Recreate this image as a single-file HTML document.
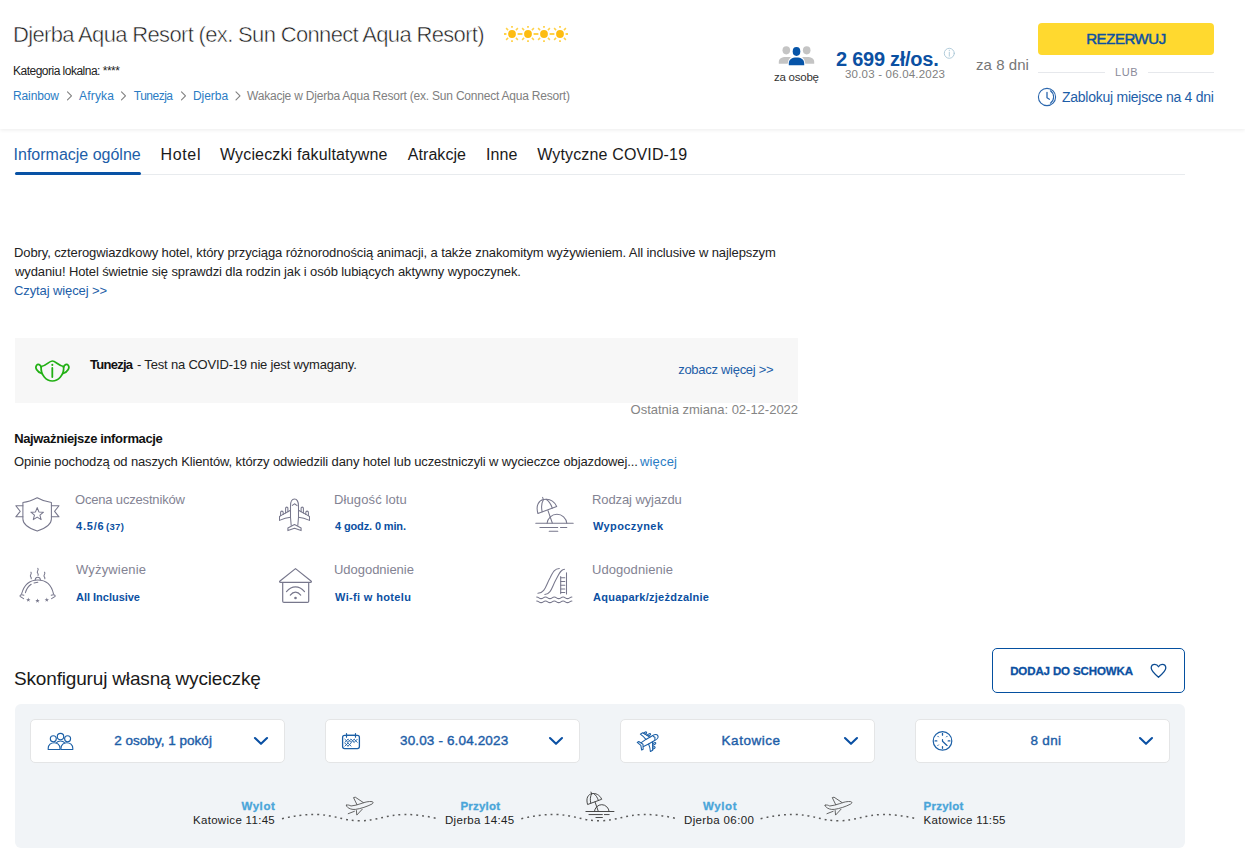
<!DOCTYPE html>
<html lang="pl"><head><meta charset="utf-8"><title>Djerba Aqua Resort</title>
<style>
html,body{margin:0;padding:0;background:#fff;}
body{width:1245px;height:863px;position:relative;overflow:hidden;font-family:"Liberation Sans", sans-serif;}
.t{position:absolute;white-space:pre;line-height:1;display:block;}
.a{position:absolute;}
svg{position:absolute;overflow:visible;}
.dd{top:719px;width:255px;height:44px;box-sizing:border-box;background:#fff;border:1px solid #e4e5e6;border-radius:5px;}
</style></head><body>
<div class="a" style="left:0;top:0;width:1245px;height:129px;background:#fff;box-shadow:0 1px 4px rgba(0,0,0,.08);"></div>
<div class="a" style="left:15px;top:174px;width:1170px;height:1px;background:#e8ebee;"></div>
<div class="a" style="left:15px;top:172px;width:126px;height:3px;background:#0852a5;border-radius:2px;"></div>
<div class="a" style="left:1038px;top:23px;width:176px;height:32px;background:#ffd92f;border-radius:4px;"></div>
<div class="a" style="left:1038px;top:72px;width:67px;height:1px;background:#e6e8ec;"></div>
<div class="a" style="left:1148px;top:72px;width:66px;height:1px;background:#e6e8ec;"></div>
<div class="a" style="left:15px;top:338px;width:783px;height:65px;background:#f7f7f7;"></div>
<div class="a" style="left:992px;top:648px;width:193px;height:45px;box-sizing:border-box;border:1px solid #0550a0;border-radius:5px;"></div>
<div class="a" style="left:15px;top:704px;width:1170px;height:144px;background:#f1f4f7;border-radius:6px;"></div>
<div class="a dd" style="left:30px;"></div>
<div class="a dd" style="left:325px;"></div>
<div class="a dd" style="left:620px;"></div>
<div class="a dd" style="left:915px;"></div>
<svg width="1245" height="863" viewBox="0 0 1245 863" style="left:0;top:0" fill="none" stroke-linecap="round" stroke-linejoin="round">
<defs>
<g id="sun">
<circle r="3.9" fill="#fdbc11" stroke="none"/>
<g stroke="#ffd24a" stroke-width="1.8" stroke-linecap="butt"><path d="M0,-6.2V-8M0,6.2V8M-5.6,0H-8M5.6,0H8"/><path stroke-width="1.5" d="M-3.9,-3.9L-5.9,-5.9M3.9,-3.9L5.9,-5.9M-3.9,3.9L-5.9,5.9M3.9,3.9L5.9,5.9"/></g>
</g>
<g id="plane">
<path d="M-4,-9C-4,-14 -2,-16 0,-16C2,-16 4,-14 4,-9L4,2.2L3.3,10.5M-4,-9L-4,2.2L-3.3,10.5"/>
<path d="M-4,-4.7L-15,1.4L-15,5.4C-11,3.5 -8,2.5 -4,2.2M4,-4.7L15,1.4L15,5.4C11,3.5 8,2.5 4,2.2"/>
<path d="M-8.9,-2V-6.6C-8.9,-8.3 -6.6,-8.3 -6.6,-6.6V-3.3M-13.9,0.8V-2.6C-13.9,-4.3 -11.3,-4.3 -11.3,-2.6V-0.6M8.9,-2V-6.6C8.9,-8.3 6.6,-8.3 6.6,-6.6V-3.3M13.9,0.8V-2.6C13.9,-4.3 11.3,-4.3 11.3,-2.6V-0.6"/>
<path d="M0,9.5L-6.6,13L-6.6,15.6L0,13.2L6.6,15.6L6.6,13Z"/>
<path d="M-2.2,-9.6L0,-11.2L2.6,-9.4"/>
</g>
<g id="beach">
<path d="M535.8,523.3H573.2M539.9,527.4H557.7M560.5,527.4H566.8M549.2,531.3H557.8"/>
<path d="M547.1,523.3A9.9,10.1 0 0 1 566.8,523.3"/>
<path d="M537.9,513.5C535.5,505 539,500.5 543.6,499.6C549,498.5 554,501 556.7,506.5Z"/>
<path d="M543.4,499.6L542.6,497.4M543.4,499.8C541.5,503 541.3,508 542.2,511.8M546,499.3C549,501 551,504.5 552.3,508.1"/>
<path d="M548,510.6L552.3,523"/>
</g>
<g id="sideplane">
<path d="M346.4,805.2C348,804.6 349.5,805.2 351,806C354,805.6 358,804.8 361,803.6C365,802 369,801.2 372,801.6C373.6,802 373.3,803.2 372,804C367,806.6 361,808.6 355.5,809.4C352,809.8 349,808.6 347.5,807.2C346.6,806.4 346.1,805.6 346.4,805.2Z"/>
<path d="M357,804.7L353.5,797.6L355.3,797.2L363.4,802.6"/>
<path d="M356.4,810.5L356.8,815.1L362.2,809.3"/>
<path d="M354.4,811.3L348.2,813.7"/>
</g>
</defs>
<use href="#sun" x="512" y="34"/><use href="#sun" x="528" y="34"/><use href="#sun" x="544" y="34"/><use href="#sun" x="560" y="34"/>
<!-- breadcrumb chevrons -->
<g stroke="#808080" stroke-width="1.1"><path d="M67.500,91.800L71.500,95.800L67.500,99.800M121.500,91.800L125.500,95.800L121.500,99.800M181.500,91.800L185.500,95.800L181.500,99.800M236,91.800L240,95.800L236,99.800"/></g>
<!-- people icon -->
<g stroke="none">
<ellipse cx="786.3" cy="50.3" rx="3.8" ry="4.1" fill="#c4c4c4"/>
<ellipse cx="806.7" cy="50.3" rx="3.8" ry="4.1" fill="#c4c4c4"/>
<path d="M778.8,63.7V62C778.8,58.5 781.5,57 786,57H790.5V63.7Z" fill="#c4c4c4"/>
<path d="M814.2,63.7V62C814.2,58.5 811.5,57 807,57H802.5V63.7Z" fill="#c4c4c4"/>
<path d="M788.8,65.3V63.500C788.8,59.500 792,57.600 796.500,57.600C801,57.600 804.200,59.500 804.200,63.500V65.300Z" fill="#fff" stroke="#fff" stroke-width="2.2"/>
<path d="M788.8,65.3V63.500C788.8,59.500 792,57.600 796.500,57.600C801,57.600 804.200,59.500 804.200,63.500V65.300Z" fill="#0654a8"/>
<ellipse cx="796.500" cy="51.500" rx="3.800" ry="4.400" fill="#0654a8"/>
</g>
<!-- info icon -->
<circle cx="949.3" cy="53.3" r="5" stroke="#a9c6d6" stroke-width="0.9"/>
<path d="M949.3,52.2V56.2M949.3,50.2V50.6" stroke="#a9c6d6" stroke-width="0.9"/>
<!-- clock lock icon -->
<g stroke="#2a66ad" stroke-width="1.1">
<circle cx="1047" cy="97" r="8.6"/>
<path d="M1050.400,90.800A7.600,7.600 0 0 1 1050.400,103.200"/>
<path d="M1047,92.3V97.8L1049.4,99.2" stroke-width="1.3"/>
</g>
<!-- mask icon -->
<g stroke="#22b014" stroke-width="1.7">
<path d="M41.2,366.5C46,366 49,361 52.3,361C55.6,361 58.6,366 63.6,366.5C64.5,375 58,381 52.3,381C46.600,381 40.3,375 41.2,366.5Z"/>
<path d="M41.3,367.5C40.5,364.500 38,363.600 36.600,365.200C34.800,367.500 36.500,371.500 41.800,373.500"/>
<path d="M63.500,367.500C64.300,364.500 66.800,363.600 68.200,365.200C70,367.500 68.300,371.500 63,373.500"/>
<path d="M52.300,368V377" stroke-width="1.8"/><path d="M52.300,364.800V365" stroke-width="2"/>
</g>
<!-- grid icons -->
<g stroke="#77778c" stroke-width="1.05">
<path d="M37.200,497.800C33,500 28,502 22.900,502.500V519C22.900,525 31,529 37.200,531.100C43.400,529 51.400,525 51.400,519V502.500C46,502 41,500 37.200,497.800Z"/>
<path d="M22.900,505.700H15.800L20.200,511.300L15.800,516.800H22.900M51.400,505.700H59L54.600,511.300L59,516.800H51.400"/>
<path d="M37.200,507.600L38.900,511.900L43.500,512.200L39.950,515.100L41.100,519.600L37.200,517.100L33.300,519.600L34.450,515.100L30.900,512.200L35.500,511.900Z"/>
<use href="#plane" x="294.500" y="515"/>
<use href="#beach"/>
<!-- bell -->
<path d="M21.600,593.900C24,585 30,580 37.800,580C45.600,580 51.500,585 53.500,593.900"/>
<path d="M23.900,595.200C21,594.200 19.300,595.400 20.400,596.600L23.600,598.600M51.200,595.200C54.200,594.200 55.900,595.400 54.800,596.600L51.600,598.600"/>
<path d="M25.400,592.700C26.500,589 28.500,586 31.200,584.300M34,582.900L37.800,582.300"/>
<path d="M35.200,580C35.500,576.300 40.100,576.300 40.400,580"/>
<path d="M37.800,568.400C39.500,570 36,571.500 37.600,573C38.300,573.800 38.400,574.600 38,575.400M30.900,572.200C32.600,573.800 29.100,575.300 30.700,576.800C31.400,577.600 31.500,578.200 31.200,578.800M44.500,572.200C46.200,573.800 42.700,575.300 44.300,576.800C45,577.600 45.100,578.200 44.800,578.800"/>
<g fill="#77778c" stroke="none">
<path id="st" d="M0,-2.300L0.540,-0.740L2.190,-0.710L0.870,0.280L1.350,1.860L0,0.920L-1.350,1.860L-0.870,0.280L-2.190,-0.710L-0.540,-0.740Z" transform="translate(28.300,599.900)"/>
<use href="#st" x="9.200" y="0.900"/><use href="#st" x="18.500" y="0"/>
</g>
<!-- house wifi -->
<path d="M295.500,568.600L280,581C279.200,581.700 279.600,582.300 280.600,582.300H310.400C311.400,582.300 311.800,581.700 311,581Z" stroke-width="1.2"/>
<path d="M282.700,582.500V601.200C282.700,602 283.300,602.400 284,602.400H307.400C308.100,602.400 308.700,602 308.700,601.200V582.500" stroke-width="1.2"/>
<path d="M286.500,591.600C292,585.400 299,585.400 304.500,591.600M290.300,595.100C293.500,591.200 297.500,591.200 300.700,595.100" stroke-width="1.200"/>
<circle cx="295.500" cy="598" r="1.300" fill="#77778c" stroke="none"/>
<!-- slide -->
<path d="M537.900,593.300C545,593.300 546,585 550,578C553,572 555,568.400 559.300,568.400M544.800,594.500C551,594 552,587 555.500,580.500C559,574 560.500,569.600 564.500,569.300"/>
<path d="M566.500,572.800V593.900M560.700,576.500V593.600"/>
<path d="M560.700,577.700H564.800M560.700,581.500H564.800M560.700,585.200H564.800M560.700,589H564.800M560.700,592.500H564.800"/>
<path d="M536.700,597C538.900,597 538.900,598.600 541.100,598.600S543.300,597 545.500,597S547.700,598.600 549.900,598.600S552.100,597 554.300,597S556.500,598.600 558.700,598.600S560.900,597 563.100,597S565.300,598.600 567.500,598.600S569.700,597 571.900,597"/>
<path d="M536.700,601C538.900,601 538.900,602.600 541.100,602.600S543.300,601 545.500,601S547.700,602.600 549.900,602.600S552.100,601 554.300,601S556.500,602.600 558.700,602.600S560.900,601 563.100,601S565.300,602.600 567.500,602.600S569.700,601 571.900,601"/>
</g>
<!-- heart -->
<path d="M1158.500,677.300C1154,673.500 1151.200,671 1151.200,668.100C1151.200,665.800 1152.900,664.300 1154.800,664.300C1156.400,664.300 1157.700,665.200 1158.500,666.700C1159.300,665.200 1160.600,664.300 1162.200,664.300C1164.100,664.300 1165.800,665.800 1165.800,668.100C1165.800,671 1163,673.500 1158.500,677.300Z" stroke="#0d4c92" stroke-width="1.300"/>
<!-- dropdown icons -->
<g stroke="#1b5fa6" stroke-width="1.100">
<circle cx="53.300" cy="738.700" r="3"/><circle cx="67.600" cy="738.700" r="3"/><circle cx="60.500" cy="736.600" r="3.200"/>
<path d="M48.200,749.500V748.300C48.200,744.800 51,742.700 54.100,742.700C57.200,742.700 60,744.800 60,748.300V749.500Z"/>
<path d="M61,749.500V748.300C61,744.800 63.800,742.700 66.900,742.700C70,742.700 72.800,744.800 72.800,748.300V749.500Z"/>
<path d="M56.200,743C57.300,741.600 58.800,741 60.500,741C62.200,741 63.700,741.600 64.800,743"/>
</g>
<g stroke="#1b5fa6" stroke-width="1.300">
<rect x="342.600" y="735.400" width="16.800" height="13.200" rx="2"/>
<path d="M346.500,733.500V737.200M355.500,733.500V737.200M346.500,735.400H355.500" stroke-width="1.200"/>
<path d="M344.9,739.3L347.9,742.3M347.9,739.3L344.9,742.3M348.0,739.3L351.0,742.3M351.0,739.3L348.0,742.3M351.1,739.3L354.1,742.3M354.1,739.3L351.1,742.3M354.2,739.3L357.2,742.3M357.2,739.3L354.2,742.3M344.9,743.1L347.9,746.1M347.9,743.1L344.9,746.1M348.0,743.1L351.0,746.1M351.0,743.1L348.0,746.1" stroke-width="0.9"/>
</g>
<g stroke="#1b5fa6" stroke-width="1.600" transform="translate(648.500,741) rotate(60) scale(0.670)"><use href="#plane"/></g>
<g stroke="#1b5fa6" stroke-width="1.200">
<circle cx="942.500" cy="740.900" r="9.300"/>
<path d="M942.500,733.500V735.200M942.500,746.600V748.300M935.100,740.900H936.800M948.200,740.900H949.900" stroke-width="1.300"/>
<path d="M937.800,736.200L938.500,736.900M947.200,736.200L946.500,736.900M937.800,745.600L938.500,744.900M947.200,745.600L946.500,744.900" stroke-width="1"/>
<path d="M942.500,739.600V741.300L946.700,745.200"/>
</g>
<g stroke="#0a50a3" stroke-width="2.100">
<path d="M255,738L261,743.800L267,738"/><path d="M550,738L556,743.800L562,738"/><path d="M845,738L851,743.800L857,738"/><path d="M1140,738L1146,743.800L1152,738"/>
</g>
<!-- timeline -->
<g stroke="#5a5a5a" stroke-width="1.5" stroke-dasharray="1.9 4" stroke-linecap="butt">
<path id="wave" d="M282,818.700Q300,814.300 316,814.500C334,814.700 343,820.800 360,820.800C377,820.800 386,814.700 404,814.500Q420,814.300 437.500,818.700"/>
<use href="#wave" x="239.300"/><use href="#wave" x="478.600"/>
</g>
<g stroke="#555" stroke-width="0.900">
<use href="#sideplane"/><use href="#sideplane" x="478.750"/>
<g transform="translate(585.900,811.500) scale(0.750) translate(-535.800,-523.300)" stroke="#444" stroke-width="1.300"><use href="#beach"/></g>
</g>
</svg>

<span class="t" style="left:13.00px;top:24px;font-size:22px;letter-spacing:-0.659px;color:#1c1c1c;-webkit-text-stroke:0.5px #fff;">Djerba Aqua Resort (ex. Sun Connect Aqua Resort)</span>
<span class="t" style="left:13.00px;top:65px;font-size:12px;letter-spacing:-0.508px;color:#222;">Kategoria lokalna: ****</span>
<span class="t" style="left:13.00px;top:90px;font-size:12px;letter-spacing:-0.126px;color:#2a7cc4;">Rainbow</span>
<span class="t" style="left:79.00px;top:90px;font-size:12px;letter-spacing:0.187px;color:#2a7cc4;">Afryka</span>
<span class="t" style="left:133.80px;top:90px;font-size:12px;letter-spacing:-0.507px;color:#2a7cc4;">Tunezja</span>
<span class="t" style="left:193.00px;top:90px;font-size:12px;letter-spacing:-0.050px;color:#2a7cc4;">Djerba</span>
<span class="t" style="left:247.00px;top:90px;font-size:12px;letter-spacing:-0.213px;color:#808080;">Wakacje w Djerba Aqua Resort (ex. Sun Connect Aqua Resort)</span>
<span class="t" style="left:774.00px;top:72px;font-size:11.5px;letter-spacing:-0.241px;color:#333;">za osobę</span>
<span class="t" style="left:836.00px;top:49px;font-size:20px;letter-spacing:-0.261px;color:#0b50a2;font-weight:700;">2 699 zł/os.</span>
<span class="t" style="left:845.00px;top:69px;font-size:11.5px;letter-spacing:0.196px;color:#808080;">30.03 - 06.04.2023</span>
<span class="t" style="left:976.00px;top:57px;font-size:15px;letter-spacing:0.050px;color:#777;">za 8 dni</span>
<span class="t" style="left:1086.20px;top:31px;font-size:15px;letter-spacing:-0.436px;color:#0b50a2;-webkit-text-stroke:0.45px #0b50a2;">REZERWUJ</span>
<span class="t" style="left:1115.00px;top:67px;font-size:11px;letter-spacing:0.642px;color:#8a8a9a;">LUB</span>
<span class="t" style="left:1062.00px;top:90px;font-size:14px;letter-spacing:-0.251px;color:#1d5ea8;">Zablokuj miejsce na 4 dni</span>
<span class="t" style="left:13.60px;top:147px;font-size:16px;letter-spacing:-0.004px;color:#1d5ea8;">Informacje ogólne</span>
<span class="t" style="left:160.40px;top:147px;font-size:16px;letter-spacing:0.690px;color:#1a1a1a;">Hotel</span>
<span class="t" style="left:220.00px;top:147px;font-size:16px;letter-spacing:0.151px;color:#1a1a1a;">Wycieczki fakultatywne</span>
<span class="t" style="left:407.80px;top:147px;font-size:16px;letter-spacing:0.052px;color:#1a1a1a;">Atrakcje</span>
<span class="t" style="left:486.00px;top:147px;font-size:16px;letter-spacing:0.080px;color:#1a1a1a;">Inne</span>
<span class="t" style="left:537.20px;top:147px;font-size:16px;letter-spacing:0.150px;color:#1a1a1a;">Wytyczne COVID-19</span>
<span class="t" style="left:14.00px;top:246px;font-size:13px;letter-spacing:-0.102px;color:#222;">Dobry, czterogwiazdkowy hotel, który przyciąga różnorodnością animacji, a także znakomitym wyżywieniem. All inclusive w najlepszym</span>
<span class="t" style="left:15.00px;top:265px;font-size:13px;letter-spacing:-0.115px;color:#222;">wydaniu! Hotel świetnie się sprawdzi dla rodzin jak i osób lubiących aktywny wypoczynek.</span>
<span class="t" style="left:14.00px;top:284px;font-size:13px;letter-spacing:-0.110px;color:#1d5ea8;">Czytaj więcej &gt;&gt;</span>
<span class="t" style="left:90.00px;top:358px;font-size:13px;letter-spacing:-0.740px;color:#111;font-weight:700;">Tunezja</span>
<span class="t" style="left:137.00px;top:358px;font-size:13px;letter-spacing:-0.182px;color:#222;">- Test na COVID-19 nie jest wymagany.</span>
<span class="t" style="left:678.20px;top:363px;font-size:13px;letter-spacing:-0.284px;color:#1d5ea8;">zobacz więcej &gt;&gt;</span>
<span class="t" style="left:630.60px;top:403px;font-size:13px;letter-spacing:-0.007px;color:#858585;">Ostatnia zmiana: 02-12-2022</span>
<span class="t" style="left:14.20px;top:432px;font-size:13px;letter-spacing:-0.354px;color:#111;font-weight:700;">Najważniejsze informacje</span>
<span class="t" style="left:14.00px;top:455px;font-size:13px;letter-spacing:-0.125px;color:#222;">Opinie pochodzą od naszych Klientów, którzy odwiedzili dany hotel lub uczestniczyli w wycieczce objazdowej...</span>
<span class="t" style="left:640.00px;top:455px;font-size:13px;letter-spacing:0.155px;color:#2a7cc4;">więcej</span>
<span class="t" style="left:75.00px;top:493px;font-size:13px;letter-spacing:-0.177px;color:#838393;">Ocena uczestników</span>
<span class="t" style="left:76.00px;top:521px;font-size:11px;letter-spacing:0.818px;color:#0b50a2;font-weight:700;">4.5/6</span>
<span class="t" style="left:106.00px;top:522px;font-size:9.5px;letter-spacing:0.331px;color:#0b50a2;font-weight:700;">(37)</span>
<span class="t" style="left:76.00px;top:563px;font-size:13px;letter-spacing:0.165px;color:#838393;">Wyżywienie</span>
<span class="t" style="left:76.00px;top:592px;font-size:11px;letter-spacing:-0.017px;color:#0b50a2;font-weight:700;">All Inclusive</span>
<span class="t" style="left:334.00px;top:493px;font-size:13px;letter-spacing:0.114px;color:#838393;">Długość lotu</span>
<span class="t" style="left:335.00px;top:521px;font-size:11px;letter-spacing:-0.133px;color:#0b50a2;font-weight:700;">4 godz. 0 min.</span>
<span class="t" style="left:334.00px;top:563px;font-size:13px;letter-spacing:-0.030px;color:#838393;">Udogodnienie</span>
<span class="t" style="left:335.00px;top:592px;font-size:11px;letter-spacing:0.347px;color:#0b50a2;font-weight:700;">Wi-fi w hotelu</span>
<span class="t" style="left:592.00px;top:493px;font-size:13px;letter-spacing:-0.096px;color:#838393;">Rodzaj wyjazdu</span>
<span class="t" style="left:593.00px;top:521px;font-size:11px;letter-spacing:0.396px;color:#0b50a2;font-weight:700;">Wypoczynek</span>
<span class="t" style="left:592.00px;top:563px;font-size:13px;letter-spacing:0.061px;color:#838393;">Udogodnienie</span>
<span class="t" style="left:593.00px;top:592px;font-size:11px;letter-spacing:0.249px;color:#0b50a2;font-weight:700;">Aquapark/zjeżdzalnie</span>
<span class="t" style="left:14.00px;top:669px;font-size:19px;letter-spacing:-0.168px;color:#1a1a1a;">Skonfiguruj własną wycieczkę</span>
<span class="t" style="left:1010.20px;top:666px;font-size:11.5px;letter-spacing:-0.120px;color:#0b50a2;font-weight:700;-webkit-text-stroke:0.3px #0b50a2;">DODAJ DO SCHOWKA</span>
<span class="t" style="left:114.20px;top:734px;font-size:13.5px;letter-spacing:0.027px;color:#1d5ea8;-webkit-text-stroke:0.4px #1d5ea8;">2 osoby, 1 pokój</span>
<span class="t" style="left:400.00px;top:734px;font-size:13.5px;letter-spacing:0.145px;color:#1d5ea8;-webkit-text-stroke:0.4px #1d5ea8;">30.03 - 6.04.2023</span>
<span class="t" style="left:721.60px;top:734px;font-size:13.5px;letter-spacing:0.513px;color:#1d5ea8;-webkit-text-stroke:0.4px #1d5ea8;">Katowice</span>
<span class="t" style="left:1030.40px;top:734px;font-size:13.5px;letter-spacing:0.352px;color:#1d5ea8;-webkit-text-stroke:0.4px #1d5ea8;">8 dni</span>
<span class="t" style="left:241.40px;top:801px;font-size:11.5px;letter-spacing:0.594px;color:#4aa5d9;font-weight:700;-webkit-text-stroke:0.3px #4aa5d9;">Wylot</span>
<span class="t" style="left:193.00px;top:815px;font-size:11.5px;letter-spacing:0.303px;color:#222;">Katowice 11:45</span>
<span class="t" style="left:460.40px;top:801px;font-size:11.5px;letter-spacing:0.206px;color:#4aa5d9;font-weight:700;-webkit-text-stroke:0.3px #4aa5d9;">Przylot</span>
<span class="t" style="left:445.00px;top:815px;font-size:11.5px;letter-spacing:0.291px;color:#222;">Djerba 14:45</span>
<span class="t" style="left:703.00px;top:801px;font-size:11.5px;letter-spacing:0.594px;color:#4aa5d9;font-weight:700;-webkit-text-stroke:0.3px #4aa5d9;">Wylot</span>
<span class="t" style="left:684.00px;top:815px;font-size:11.5px;letter-spacing:0.363px;color:#222;">Djerba 06:00</span>
<span class="t" style="left:923.60px;top:801px;font-size:11.5px;letter-spacing:0.233px;color:#4aa5d9;font-weight:700;-webkit-text-stroke:0.3px #4aa5d9;">Przylot</span>
<span class="t" style="left:923.60px;top:815px;font-size:11.5px;letter-spacing:0.316px;color:#222;">Katowice 11:55</span>
</body></html>
